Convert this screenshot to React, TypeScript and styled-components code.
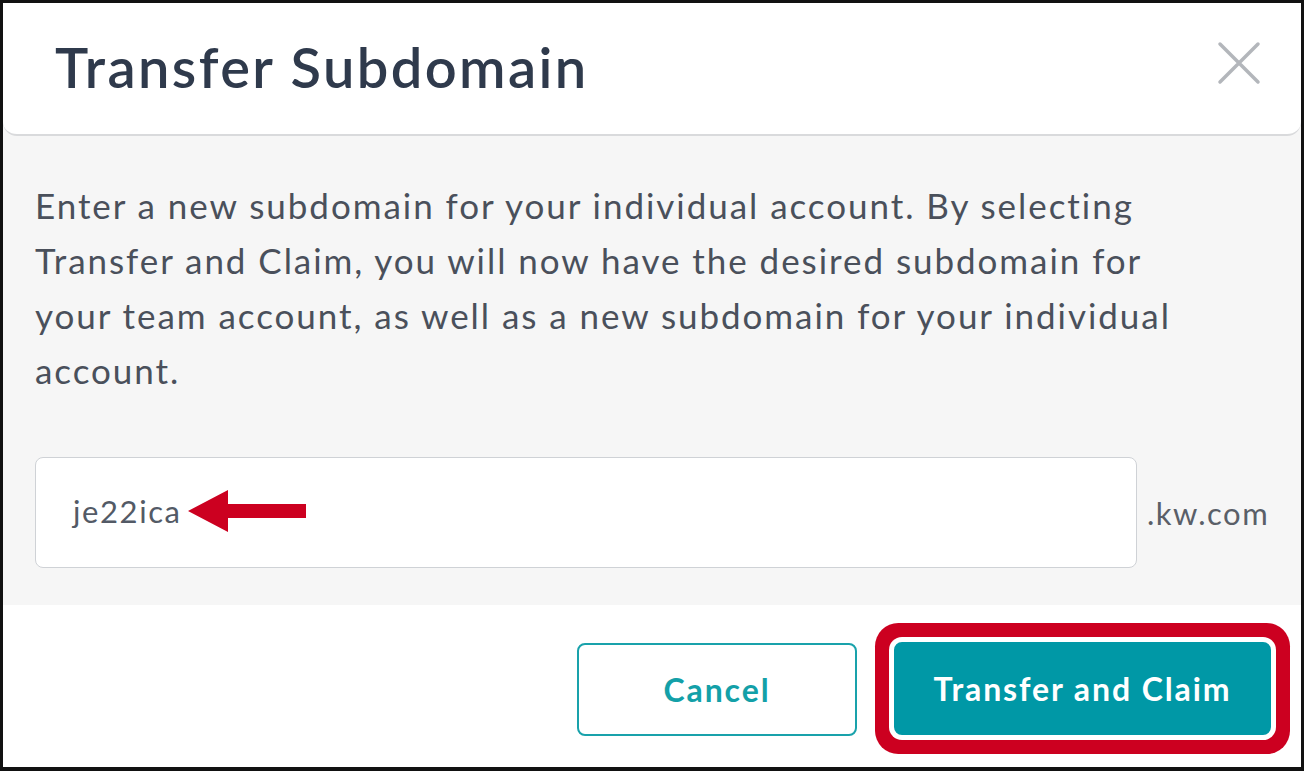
import React, { useState } from 'react';
import styled, { createGlobalStyle } from 'styled-components';

const GlobalStyle = createGlobalStyle`
  html, body {
    margin: 0;
    padding: 0;
    background: #ffffff;
  }
  * {
    box-sizing: border-box;
  }
`;

const Frame = styled.div`
  width: 1304px;
  height: 771px;
  border: 3px solid #111111;
  border-bottom-width: 4px;
  background: #ffffff;
  display: flex;
  flex-direction: column;
  font-family: 'Lato', 'Noto Sans', sans-serif;
  overflow: hidden;
`;

const Header = styled.div`
  height: 133px;
  flex-shrink: 0;
  display: flex;
  align-items: center;
  justify-content: space-between;
  padding: 0 40px 4px 52px;
  background: #ffffff;
  border-bottom: 2px solid #d9dadc;
  border-radius: 0 0 14px 14px;
  position: relative;
  z-index: 1;
`;

const Title = styled.h1`
  margin: 0;
  font-size: 56px;
  font-weight: 600;
  color: #2f3a4c;
  letter-spacing: 2.4px;
`;

const CloseButton = styled.button`
  border: 0;
  background: transparent;
  padding: 0;
  width: 44px;
  height: 44px;
  margin-bottom: 8px;
  display: flex;
  align-items: center;
  justify-content: center;
  cursor: pointer;
`;

const Body = styled.div`
  background: #f6f6f6;
  margin-top: -14px;
  padding: 56px 30px 24px 32px;
  height: 483px;
  flex-shrink: 0;
`;

const Description = styled.p`
  margin: 0;
  font-size: 35px;
  line-height: 55px;
  letter-spacing: 1.95px;
  color: #4a505b;
`;

const FieldRow = styled.div`
  display: flex;
  align-items: center;
  margin-top: 59px;
`;

const FieldBox = styled.div`
  width: 1102px;
  height: 111px;
  background: #ffffff;
  border: 1.5px solid #cfd2d6;
  border-radius: 8px;
  display: flex;
  align-items: center;
  padding: 0 0 4px 37px;
`;

const FieldValue = styled.span`
  font-size: 31px;
  letter-spacing: 1.6px;
  color: #535a66;
`;

const Suffix = styled.span`
  margin-left: 10px;
  font-size: 31px;
  letter-spacing: 1.5px;
  color: #5a5f68;
`;

const Footer = styled.div`
  flex: 1;
  display: flex;
  align-items: center;
  justify-content: flex-end;
  gap: 37px;
  padding: 4px 30px 0 0;
`;

const Button = styled.button<{ $primary?: boolean }>`
  height: 93px;
  width: ${(p) => (p.$primary ? '377px' : '280px')};
  border-radius: 8px;
  border: 2px solid ${(p) => (p.$primary ? '#0098a6' : '#19a2ab')};
  background: ${(p) => (p.$primary ? '#0098a6' : '#ffffff')};
  color: ${(p) => (p.$primary ? '#ffffff' : '#13a0a8')};
  font-family: 'Lato', 'Noto Sans', sans-serif;
  font-size: 32px;
  font-weight: 700;
  letter-spacing: 1.9px;
  cursor: pointer;
  box-shadow: ${(p) => (p.$primary ? '0 0 0 5px #ffffff, 0 0 0 19px #cc0020' : 'none')};
  margin-top: ${(p) => (p.$primary ? '0' : '2px')};
`;

function CloseIcon() {
  return (
    <svg width="44" height="44" viewBox="0 0 44 44">
      <path d="M3 3 L41 41 M41 3 L3 41" stroke="#b3b6bb" strokeWidth="3.5" strokeLinecap="round" fill="none" />
    </svg>
  );
}

function ArrowMark() {
  return (
    <svg width="120" height="42" viewBox="0 0 120 42" style={{ marginLeft: 6 }}>
      <polygon points="0,21 40,0 40,14 118,14 118,28 40,28 40,42" fill="#cc0020" />
    </svg>
  );
}

function App(): JSX.Element {
  const [subdomain] = useState<string>('je22ica');
  return (
    <>
      <GlobalStyle />
      <Frame>
        <Header>
          <Title>Transfer Subdomain</Title>
          <CloseButton type="button" aria-label="close">
            <CloseIcon />
          </CloseButton>
        </Header>
        <Body>
          <Description>
            Enter a new subdomain for your individual account. By selecting
            <br />
            Transfer and Claim, you will now have the desired subdomain for
            <br />
            your team account, as well as a new subdomain for your individual
            <br />
            account.
          </Description>
          <FieldRow>
            <FieldBox>
              <FieldValue>{subdomain}</FieldValue>
              <ArrowMark />
            </FieldBox>
            <Suffix>.kw.com</Suffix>
          </FieldRow>
        </Body>
        <Footer>
          <Button type="button">Cancel</Button>
          <Button type="button" $primary>Transfer and Claim</Button>
        </Footer>
      </Frame>
    </>
  );
}

export default App;
